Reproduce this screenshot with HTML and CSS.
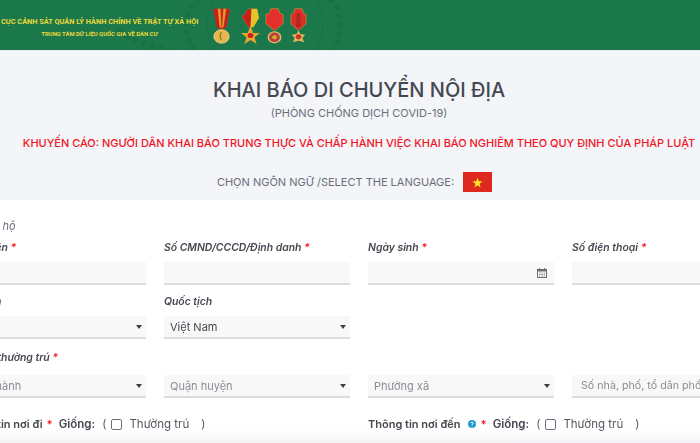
FILE: index.html
```html
<!DOCTYPE html>
<html lang="vi">
<head>
<meta charset="utf-8">
<title>Khai báo di chuyển nội địa</title>
<link rel="stylesheet" href="styles.css">
</head>
<body>
<div class="page">
  <header class="banner">
    <svg class="emblem" viewBox="0 0 700 50" aria-hidden="true">
      <g fill="none" stroke="#126a3c" stroke-width="5" stroke-dasharray="5 4" opacity=".4">
        <path d="M200 -2C183 12 181 32 196 52"/>
        <path d="M330 -2C342 12 344 32 332 52"/>
        <path d="M118 30C130 40 150 48 175 50"/>
      </g>
      <g fill="none" stroke="#126a3c" stroke-width="1" opacity=".4">
        <circle cx="265" cy="25" r="58"/>
      </g>
    </svg>
    <div class="org">
      <div class="org-main">CỤC CẢNH SÁT QUẢN LÝ HÀNH CHÍNH VỀ TRẬT TỰ XÃ HỘI</div>
      <div class="org-sub">TRUNG TÂM DỮ LIỆU QUỐC GIA VỀ DÂN CƯ</div>
    </div>
    <div class="medals">
      <svg class="medal" viewBox="0 0 20 44" preserveAspectRatio="none" aria-hidden="true">
        <path d="M1 2H19L15 24 10 27 5 24Z" fill="#c9201c"/>
        <path d="M6 2H9L10 25 8 24ZM12 2H15L12 24 10.500 25Z" fill="#e8962a"/>
        <circle cx="10" cy="35" r="8" fill="#e3b64f" stroke="#f3d782"/>
        <path d="M10 30C8 33 8 37 10 39" stroke="#8f6a1e" fill="none" stroke-width="1.300"/>
      </svg>
      <svg class="medal" viewBox="0 0 20 44" preserveAspectRatio="none" aria-hidden="true">
        <path d="M1 12 8 2H17L19 13 13 24H8Z" fill="#e6c326"/>
        <path d="M1 12 8 2H11L10 24H8Z" fill="#c9201c"/>
        <path d="M10 22 12.800 31 20 31 14.200 36 16.400 44 10 39.200 3.600 44 5.800 36 0 31 7.200 31Z" fill="#e8a62c"/>
        <circle cx="10" cy="34" r="3" fill="#c9201c"/>
      </svg>
      <svg class="medal" viewBox="0 0 20 44" preserveAspectRatio="none" aria-hidden="true">
        <path d="M6 2H14L15 7 19 9 19 20 10 28 1 20 1 9 5 7Z" fill="#e4302a" stroke="#d9a83a" stroke-width=".6"/>
        <circle cx="10" cy="36" r="6.500" fill="#b9433a" stroke="#e2b96b" stroke-width="1.600"/>
        <circle cx="10" cy="36" r="2.500" fill="#d9a83a"/>
      </svg>
      <svg class="medal" viewBox="0 0 20 44" preserveAspectRatio="none" aria-hidden="true">
        <path d="M6 2H14L15 7 18 9 18 20 10 28 2 20 2 9 5 7Z" fill="#d92f2a" stroke="#d9a83a" stroke-width=".6"/>
        <path d="M8 7H12L12.500 24H7.500Z" fill="#b5261f"/>
        <path d="M10 28 12 32 17 33 14 37 16 42 10 40 4 42 6 37 3 33 8 32Z" fill="#e2b35a"/>
        <circle cx="10" cy="35.500" r="3" fill="#c23a2a"/>
      </svg>
    </div>
  </header>

  <section class="intro">
    <h1 class="title">KHAI BÁO DI CHUYỂN NỘI ĐỊA</h1>
    <p class="subtitle">(PHÒNG CHỐNG DỊCH COVID-19)</p>
    <p class="warning">KHUYẾN CÁO: NGƯỜI DÂN KHAI BÁO TRUNG THỰC VÀ CHẤP HÀNH VIỆC KHAI BÁO NGHIÊM THEO QUY ĐỊNH CỦA PHÁP LUẬT</p>
    <div class="lang">
      <span>CHỌN NGÔN NGỮ /SELECT THE LANGUAGE:</span>
      <svg class="flag" viewBox="0 0 30 20" preserveAspectRatio="none" aria-label="Tiếng Việt">
        <rect width="30" height="20" fill="#de2a1e"/>
        <path d="M15 5.500 16.300 9.200 20.200 9.300 17.100 11.700 18.200 15.400 15 13.200 11.800 15.400 12.900 11.700 9.800 9.300 13.700 9.200Z" fill="#ffe625"/>
      </svg>
    </div>
  </section>

  <form class="form">
    <div class="proxy"><span class="box"></span>Khai hộ</div>

    <div class="grid">
      <div class="field">
        <label class="label">Họ và tên <b class="req">*</b></label>
        <div class="control"></div>
      </div>
      <div class="field">
        <label class="label">Số CMND/CCCD/Định danh <b class="req">*</b></label>
        <div class="control"></div>
      </div>
      <div class="field">
        <label class="label">Ngày sinh <b class="req">*</b></label>
        <div class="control end">
          <svg class="cal" viewBox="0 0 10 10" aria-hidden="true">
            <path d="M2.500 0v2M7.500 0v2" stroke="#6d6d6d" stroke-width="1"/>
            <rect x=".5" y="1.500" width="9" height="8" fill="#fff" stroke="#6d6d6d"/>
            <path d="M.5 1.500h9v2h-9z" fill="#6d6d6d"/>
            <path d="M2 5h1.500M4.300 5h1.500M6.600 5h1.500M2 6.500h1.500M4.300 6.500h1.500M6.600 6.500h1.500M2 8h1.500M4.300 8h1.500M6.600 8h1.500" stroke="#8a8a8a" stroke-width=".9"/>
          </svg>
        </div>
      </div>
      <div class="field">
        <label class="label">Số điện thoại <b class="req">*</b></label>
        <div class="control"></div>
      </div>

      <div class="field">
        <label class="label">Giới tính</label>
        <div class="control select"><i class="caret"></i></div>
      </div>
      <div class="field">
        <label class="label">Quốc tịch</label>
        <div class="control select"><span>Việt Nam</span><i class="caret"></i></div>
      </div>
    </div>

    <div class="label-row"><label class="label">Địa chỉ thường trú <b class="req">*</b></label></div>
    <div class="grid">
      <div class="control select muted"><span>Tỉnh thành</span><i class="caret"></i></div>
      <div class="control select muted"><span>Quận huyện</span><i class="caret"></i></div>
      <div class="control select muted"><span>Phường xã</span><i class="caret"></i></div>
      <div class="control muted address"><span class="nowrap">Số nhà, phố, tổ dân phố</span></div>
    </div>

    <div class="places">
      <div class="place">Thông tin nơi đi <b class="req">*</b> <span class="same">Giống:</span> <span class="paren">(</span><span class="box"></span><span class="perm">Thường trú</span><span class="paren">)</span></div>
      <div class="place">Thông tin nơi đến <svg class="help" viewBox="0 0 10 10" aria-hidden="true"><circle cx="5" cy="5" r="4" fill="#1f9ec9"/><path d="M3.800 4.200C3.800 3 6.200 3 6.200 4.200 6.200 5 5 5 5 6M5 7v.7" stroke="#fff" fill="none"/></svg> <b class="req">*</b> <span class="same">Giống:</span> <span class="paren">(</span><span class="box"></span><span class="perm">Thường trú</span><span class="paren">)</span></div>
    </div>
  </form>
  <div class="fade"></div>
</div>
</body>
</html>
```

FILE: styles.css
```css
* { box-sizing: border-box; }
html, body { margin: 0; height: 100%; overflow: hidden; background: #fff; }
.page {
  position: relative;
  width: 700px;
  height: 443px;
  overflow: hidden;
  font-family: Inter, "Liberation Sans", sans-serif;
  color: #454851;
  filter: blur(0.45px);
}

.banner {
  position: relative;
  height: 51px;
  display: flex;
  background: #1b784a;
  border-bottom: 1px solid #e6ebe8;
}
.emblem { position: absolute; inset: 0; width: 700px; height: 50px; }
.org {
  position: relative;
  width: 197px;
  margin: 0 2px 0 1px;
  padding-top: 16px;
  text-align: center;
  font-family: Roboto, "Liberation Sans", sans-serif;
  font-weight: 700;
  color: #ecd83a;
  white-space: nowrap;
}
.org-main { font-size: 7.370px; line-height: 9px; margin-top: 1px; }
.org-sub { font-size: 5.900px; line-height: 7px; margin-top: 5px; }
.medals { position: relative; display: flex; gap: 5px; margin-left: 12px; padding-top: 7px; }
.medal { width: 19px; height: 37px; display: block; }
.medal:first-child { margin-right: 5px; }

.intro {
  height: 149px;
  background: #f3f5f9;
  text-align: center;
  padding: 26px 0 0 18px;
}
.title { margin: 0; font-size: 20px; line-height: 26px; font-weight: 500; color: #454851; }
.subtitle { margin: 3px 0 0; font-size: 11px; line-height: 14px; color: #6b6f78; }
.warning { margin: 15px 0 0; font-size: 10.970px; line-height: 16px; font-weight: 500; color: #f0141e; white-space: nowrap; }
.lang {
  margin-top: 21px;
  display: flex;
  justify-content: center;
  align-items: center;
  gap: 9px;
  padding-right: 9px;
  font-size: 11px;
  color: #6b6f78;
}
.flag { width: 29px; height: 20px; display: block; }

.form { margin-left: -40px; width: 800px; }
.proxy {
  height: 37px;
  padding-top: 15px;
  font-size: 11px;
  line-height: 14px;
  font-style: italic;
  color: #6b6f78;
  display: flex;
  align-items: center;
  gap: 4px;
}
.grid {
  display: grid;
  grid-template-columns: repeat(4, 186px);
  column-gap: 18px;
}
.field { display: flex; flex-direction: column; height: 54px; }
.label {
  display: block;
  font-size: 10.400px;
  line-height: 15px;
  font-weight: 600;
  font-style: italic;
  color: #454851;
  white-space: nowrap;
}
.field .label { margin-top: 3px; height: 22px; }
.req { color: #f5222d; font-weight: 700; }
.control {
  height: 23px;
  background: #f8f8f8;
  border-bottom: 2px solid #dcdcdc;
  display: flex;
  align-items: center;
  padding: 0 6px;
  font-size: 11px;
  color: #454851;
  overflow: hidden;
}
.select { justify-content: space-between; padding-right: 4px; }
.select .caret { margin-left: auto; }
.end { justify-content: flex-end; padding-right: 7px; }
.muted { color: #8a8d94; }
.address { padding-left: 9px; font-size: 10.700px; }
.nowrap { white-space: nowrap; }
.caret {
  display: block;
  width: 0;
  height: 0;
  border-left: 3.500px solid transparent;
  border-right: 3.500px solid transparent;
  border-top: 4px solid #3c3f4a;
}
.cal { width: 10px; height: 10px; display: block; }
.label-row { height: 25px; margin-top: 5px; }
.places {
  display: grid;
  grid-template-columns: repeat(2, 390px);
  column-gap: 18px;
  margin-top: 18px;
}
.place {
  display: flex;
  align-items: center;
  gap: 4px;
  font-size: 11px;
  line-height: 16px;
  font-weight: 600;
  color: #454851;
  white-space: nowrap;
}
.same { margin-left: 2px; font-size: 11.500px; }
.paren, .perm { font-weight: 400; font-size: 11.500px; color: #555862; }
.paren { margin-left: 3px; }
.perm { margin: 0 5px 0 3px; }
.box {
  display: inline-block;
  width: 11px;
  height: 11px;
  flex: none;
  margin-left: 1px;
  background: #fff;
  border: 1px solid #6d7080;
  border-radius: 2px;
}
.help { width: 10px; height: 10px; flex: none; margin-left: 2px; }
.fade {
  position: absolute;
  left: 0;
  right: 0;
  bottom: 0;
  height: 14px;
  background: linear-gradient(to bottom, rgba(232,232,236,0), rgba(226,226,232,.4));
}
```
